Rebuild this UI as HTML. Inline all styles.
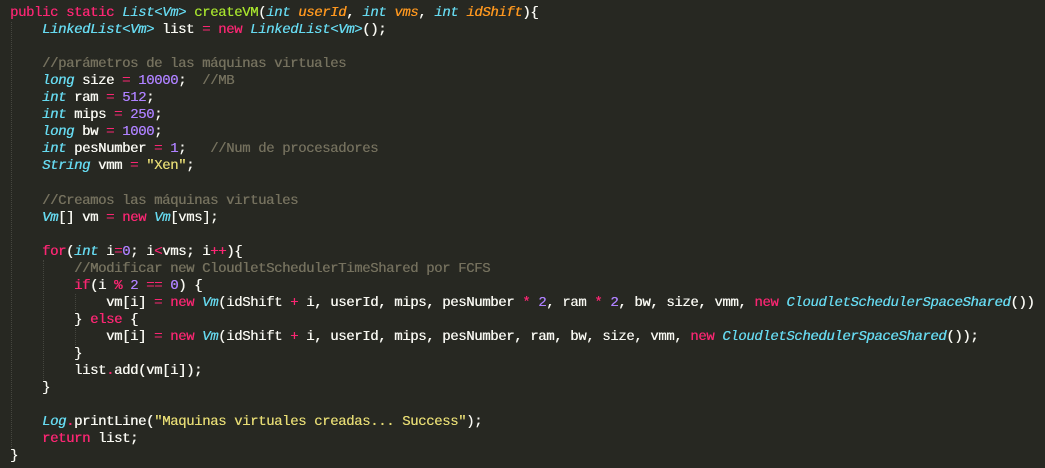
<!DOCTYPE html>
<html><head><meta charset="utf-8"><style>
html,body{margin:0;padding:0;background:#272822;width:1045px;height:468px;overflow:hidden}
pre{position:absolute;left:10px;top:5px;margin:0;font-family:"Liberation Mono",monospace;font-size:14px;letter-spacing:-0.4px;line-height:17.04px;color:#f8f8f2;text-shadow:0.3px 0 0 currentColor}
.k{color:#f92672}.t{color:#66d9ef;font-style:italic}.f{color:#a6e22e}.p{color:#fd971f;font-style:italic}.n{color:#ae81ff}.s{color:#e6db74}.c{color:#75715e}
.g{position:absolute;border-left:1px dotted #45463f;width:0}
</style></head><body>
<div class="g" style="left:11px;top:22px;height:425px"></div>
<div class="g" style="left:43px;top:260px;height:120px"></div>
<div class="g" style="left:75px;top:294px;height:17px"></div>
<div class="g" style="left:75px;top:328px;height:17px"></div>
<pre><span class="k">public</span> <span class="k">static</span> <span class="t">List&lt;Vm&gt;</span> <span class="f">createVM</span>(<span class="t">int</span> <span class="p">userId</span>, <span class="t">int</span> <span class="p">vms</span>, <span class="t">int</span> <span class="p">idShift</span>){
    <span class="t">LinkedList&lt;Vm&gt;</span> list <span class="k">=</span> <span class="k">new</span> <span class="t">LinkedList&lt;Vm&gt;</span>();

    <span class="c">//parámetros de las máquinas virtuales</span>
    <span class="t">long</span> size <span class="k">=</span> <span class="n">10000</span>;  <span class="c">//MB</span>
    <span class="t">int</span> ram <span class="k">=</span> <span class="n">512</span>;
    <span class="t">int</span> mips <span class="k">=</span> <span class="n">250</span>;
    <span class="t">long</span> bw <span class="k">=</span> <span class="n">1000</span>;
    <span class="t">int</span> pesNumber <span class="k">=</span> <span class="n">1</span>;   <span class="c">//Num de procesadores</span>
    <span class="t">String</span> vmm <span class="k">=</span> <span class="s">"Xen"</span>;

    <span class="c">//Creamos las máquinas virtuales</span>
    <span class="t">Vm</span>[] vm <span class="k">=</span> <span class="k">new</span> <span class="t">Vm</span>[vms];

    <span class="k">for</span>(<span class="t">int</span> i<span class="k">=</span><span class="n">0</span>; i<span class="k">&lt;</span>vms; i<span class="k">++</span>){
        <span class="c">//Modificar new CloudletSchedulerTimeShared por FCFS</span>
        <span class="k">if</span>(i <span class="k">%</span> <span class="n">2</span> <span class="k">==</span> <span class="n">0</span>) {
            vm[i] <span class="k">=</span> <span class="k">new</span> <span class="t">Vm</span>(idShift <span class="k">+</span> i, userId, mips, pesNumber <span class="k">*</span> <span class="n">2</span>, ram <span class="k">*</span> <span class="n">2</span>, bw, size, vmm, <span class="k">new</span> <span class="t">CloudletSchedulerSpaceShared</span>())
        } <span class="k">else</span> {
            vm[i] <span class="k">=</span> <span class="k">new</span> <span class="t">Vm</span>(idShift <span class="k">+</span> i, userId, mips, pesNumber, ram, bw, size, vmm, <span class="k">new</span> <span class="t">CloudletSchedulerSpaceShared</span>());
        }
        list<span class="k">.</span>add(vm[i]);
    }

    <span class="t">Log</span><span class="k">.</span>printLine(<span class="s">"Maquinas virtuales creadas... Success"</span>);
    <span class="k">return</span> list;
}</pre>
</body></html>
